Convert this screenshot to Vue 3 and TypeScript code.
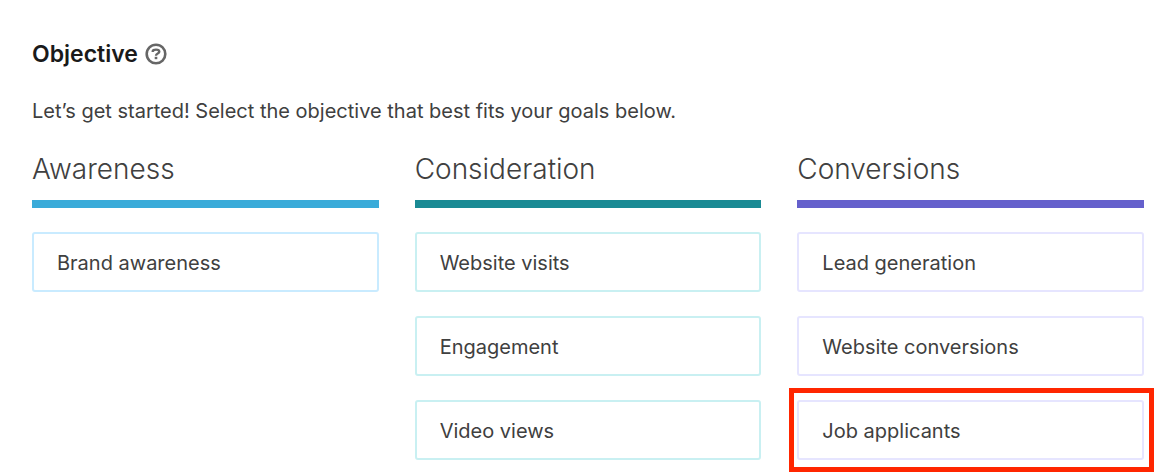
<script setup lang="ts">
interface ObjectiveGroup {
  id: string
  title: string
  options: string[]
}

const groups: ObjectiveGroup[] = [
  { id: 'awareness', title: 'Awareness', options: ['Brand awareness'] },
  { id: 'consideration', title: 'Consideration', options: ['Website visits', 'Engagement', 'Video views'] },
  { id: 'conversions', title: 'Conversions', options: ['Lead generation', 'Website conversions', 'Job applicants'] },
]

const highlighted = 'Job applicants'
</script>

<template>
  <main class="page">
    <header class="heading">
      <h1>Objective</h1>
      <button class="help" type="button" aria-label="Help">
        <svg viewBox="0 0 22 22" width="22" height="22" fill="none" aria-hidden="true">
          <circle cx="11" cy="11" r="9.3" stroke="#666" stroke-width="2.6" />
          <path
            d="M7.7 9.1V8.7C7.7 7.3 8.9 6.6 11 6.6S14.3 7.3 14.3 8.8C14.3 10.8 11 10.3 11 12.7"
            stroke="#666"
            stroke-width="2.4"
          />
          <rect x="9.7" y="13.8" width="2.6" height="2.4" fill="#666" />
        </svg>
      </button>
    </header>
    <p class="intro">Let’s get started! Select the objective that best fits your goals below.</p>
    <div class="groups">
      <section v-for="group in groups" :key="group.id" :class="['group', group.id]">
        <h2>{{ group.title }}</h2>
        <ul>
          <li v-for="option in group.options" :key="option" :class="{ highlighted: option === highlighted }">
            <button class="option" type="button">{{ option }}</button>
          </li>
        </ul>
      </section>
    </div>
  </main>
</template>

<style>
body {
  margin: 0;
  background: #fff;
}
</style>

<style scoped>
.page {
  padding: 38px 22px 16px 32px;
  font-family: Inter, "Liberation Sans", sans-serif;
  font-size: 20px;
  color: #404040;
}

.heading {
  display: flex;
  align-items: center;
  gap: 7px;
}

h1 {
  margin: 0;
  font-size: 23px;
  line-height: 32px;
  font-weight: 600;
  color: #1a1a1a;
}

.help {
  display: flex;
  padding: 0;
  border: 0;
  background: none;
}

.intro {
  margin: 25px 0 0;
  line-height: 32px;
}

.groups {
  display: grid;
  grid-template-columns: repeat(3, minmax(0, 1fr));
  gap: 36px;
  margin-top: 21px;
}

.group {
  --bar: #3aabd9;
  --edge: #c9ebff;
}

.consideration {
  --bar: #1a8a94;
  --edge: #c9f0f2;
}

.conversions {
  --bar: #6560cc;
  --edge: #e6e5ff;
}

h2 {
  margin: 0;
  padding-bottom: 10px;
  border-bottom: 8px solid var(--bar);
  font-size: 28px;
  line-height: 42px;
  font-weight: 300;
}

ul {
  display: grid;
  gap: 24px;
  margin: 24px 0 0;
  padding: 0;
  list-style: none;
}

.option {
  display: block;
  box-sizing: border-box;
  width: 100%;
  padding: 13px 23px 11px;
  border: 2px solid var(--edge);
  border-radius: 3px;
  background: #fff;
  font: inherit;
  line-height: 32px;
  text-align: left;
  color: inherit;
}

.highlighted {
  position: relative;
}

.highlighted::after {
  content: "";
  position: absolute;
  inset: -12px -10px -12px -8px;
  border: 5px solid #ff2600;
  pointer-events: none;
}
</style>
